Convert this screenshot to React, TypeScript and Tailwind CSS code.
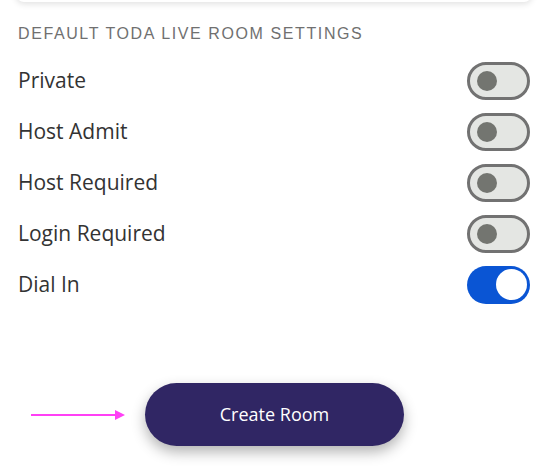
import React from 'react';

interface Setting {
  label: string;
  on: boolean;
}

const settings: Setting[] = [
  { label: 'Private', on: false },
  { label: 'Host Admit', on: false },
  { label: 'Host Required', on: false },
  { label: 'Login Required', on: false },
  { label: 'Dial In', on: true },
];

const Toggle: React.FC<{ on: boolean }> = ({ on }) =>
  on ? (
    <div className="flex h-[38px] w-[63px] items-center justify-end rounded-full bg-[#0a55d4] px-[3px]">
      <div className="h-[31px] w-[31px] rounded-full bg-white" />
    </div>
  ) : (
    <div className="flex h-[38px] w-[63px] items-center rounded-full border-[3px] border-[#727272] bg-[#e4e6e3] pl-[7px]">
      <div className="h-[20px] w-[20px] rounded-full bg-[#737570]" />
    </div>
  );

export default function App() {
  return (
    <div className="h-[476px] w-[548px] overflow-hidden bg-white" style={{ fontFamily: '"Open Sans", sans-serif' }}>
      <div className="mx-[16px] -mt-[20px] h-[22px] rounded-lg bg-white shadow-[0_2px_6px_rgba(0,0,0,0.12)]" />
      <div className="px-[18px]">
        <div
          className="mt-[22px] text-[16px] leading-[20px] tracking-[1.6px] text-[#707070]"
          style={{ fontFamily: '"Liberation Sans", Arial, sans-serif' }}
        >
          DEFAULT TODA LIVE ROOM SETTINGS
        </div>
        <div className="mt-[11px] flex flex-col">
          {settings.map((s) => (
            <div key={s.label} className="flex h-[51px] items-center justify-between">
              <span className="text-[21px] text-[#333333]">{s.label}</span>
              <Toggle on={s.on} />
            </div>
          ))}
        </div>
      </div>
      <div className="mt-[73px] flex items-center pl-[31px]">
        <svg width="94" height="12" viewBox="0 0 94 12" className="mr-[20px]">
          <line x1="0" y1="6" x2="86" y2="6" stroke="#ff40f5" strokeWidth="2" />
          <polygon points="84,1 94,6 84,11" fill="#ff40f5" />
        </svg>
        <button className="h-[63px] w-[259px] rounded-full bg-[#302664] text-[18px] text-white shadow-[0_6px_14px_rgba(0,0,0,0.3)]">
          Create Room
        </button>
      </div>
    </div>
  );
}
